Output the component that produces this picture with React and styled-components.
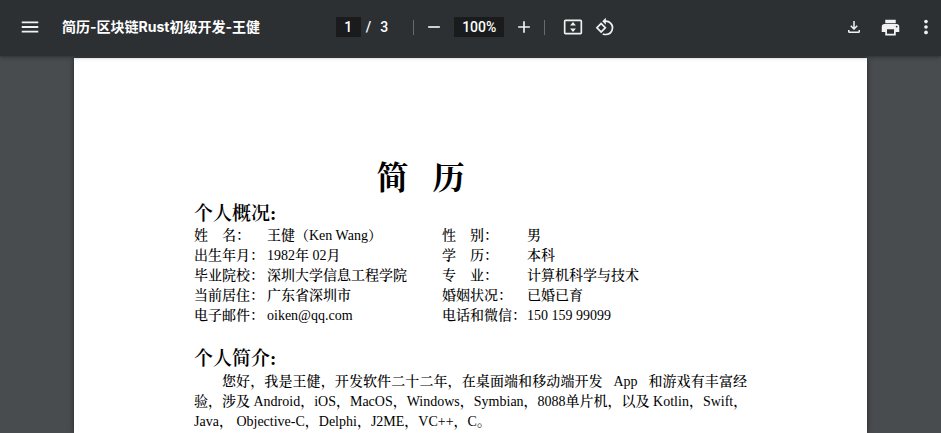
import React from "react";
import styled, { createGlobalStyle } from "styled-components";

const uiFont = '"Inter", "Noto Sans CJK SC", sans-serif';
const documentFont = '"Liberation Serif", "Noto Serif CJK SC", "Noto Sans CJK SC", serif';

const GlobalStyle = createGlobalStyle`
  *, *::before, *::after { box-sizing: border-box; }
  body { margin: 0; background: #494c4f; }
`;

const Viewer = styled.div`
  display: flex;
  flex-direction: column;
  height: 100vh;
  overflow: hidden;
`;

const Toolbar = styled.header`
  position: relative;
  z-index: 1;
  flex: none;
  display: grid;
  grid-template-columns: 1fr auto 1fr;
  align-items: center;
  height: 56px;
  padding-bottom: 2px;
  background: #2d3033;
  color: #fff;
  font-family: ${uiFont};
  box-shadow: 0 1px 4px rgba(0, 0, 0, 0.4);
`;

const StartGroup = styled.div`
  display: flex;
  align-items: center;
  gap: 16px;
  padding-left: 14px;
`;

const CenterGroup = styled.div`
  display: flex;
  align-items: center;
  padding-left: 16px;
`;

const EndGroup = styled.div`
  display: flex;
  justify-content: flex-end;
  gap: 6px;
`;

const FileName = styled.h1`
  margin: 0;
  font-size: 14px;
  font-weight: 700;
  line-height: 20px;
  white-space: nowrap;
`;

const IconButton = styled.button`
  display: flex;
  align-items: center;
  justify-content: center;
  width: ${({ $wide }) => ($wide ? "32px" : "30px")};
  height: 32px;
  padding: 0;
  border: 0;
  background: transparent;
  color: #f1f1f1;
  cursor: pointer;
`;

const ToolbarInput = styled.input`
  width: ${({ $width }) => $width};
  height: 20px;
  padding: 0;
  border: 0;
  border-radius: 0;
  background: #191b1c;
  color: #fff;
  font-family: Roboto, sans-serif;
  font-size: 14px;
  font-weight: 500;
  text-align: center;
`;

const PageCount = styled.span`
  display: flex;
  gap: 9px;
  margin: 0 25px 0 5px;
  font-family: Roboto, sans-serif;
  font-size: 14px;
  font-weight: 500;
  line-height: 20px;
`;

const Divider = styled.span`
  width: 1px;
  height: 15px;
  background: #686b6e;
`;

const ZoomGroup = styled.div`
  display: flex;
  align-items: center;
  gap: 5px;
  padding: 0 5px;
`;

const ViewGroup = styled.div`
  display: flex;
  padding-left: 12px;
`;

const Canvas = styled.main`
  flex: 1;
  min-height: 0;
  padding-top: 2px;
  overflow: hidden;
`;

const Sheet = styled.article`
  width: 100%;
  max-width: 793px;
  min-height: 100%;
  margin: 0 auto;
  padding: 97px 120px 0;
  background: #fff;
  color: #000;
  font-family: ${documentFont};
  font-size: 14px;
  font-weight: 500;
  line-height: 20px;
  box-shadow: 0 0 5px rgba(0, 0, 0, 0.5);
`;

const Title = styled.h2`
  display: flex;
  justify-content: center;
  gap: 24px;
  margin: 0;
  padding-right: 100px;
  font-size: 32px;
  font-weight: 700;
  line-height: 47px;
`;

const SectionTitle = styled.h3`
  margin: 0;
  font-size: 19px;
  font-weight: 600;
  line-height: 24px;
`;

const Details = styled.dl`
  display: grid;
  grid-template-columns: 73px 175px 85px auto;
  margin: 0 0 21px;
  white-space: pre;
`;

const Term = styled.dt`
  margin: 0;
`;

const Value = styled.dd`
  margin: 0;
`;

const Summary = styled.p`
  margin: 1px 0 0;
`;

const Line = styled.span`
  display: block;
  padding-left: ${({ $indent }) => ($indent ? "28px" : "0")};
  text-align-last: ${({ $fill }) => ($fill ? "justify" : "start")};
  white-space: nowrap;
`;

const Icon = ({ size = 24, children }) => (
  <svg width={size} height={size} viewBox="0 0 24 24" fill="currentColor" aria-hidden="true">
    {children}
  </svg>
);

const details = [
  ["姓　名：", "王健（Ken Wang）", "性　别：", "男"],
  ["出生年月：", "1982年 02月", "学　历：", "本科"],
  ["毕业院校：", "深圳大学信息工程学院", "专　业：", "计算机科学与技术"],
  ["当前居住：", "广东省深圳市", "婚姻状况：", "已婚已育"],
  ["电子邮件：", "oiken@qq.com", "电话和微信：", "150 159 99099"],
];

export default function App() {
  return (
    <Viewer lang="zh-CN">
      <GlobalStyle />
      <Toolbar>
        <StartGroup>
          <IconButton $wide aria-label="菜单">
            <Icon size={22}><path d="M3 18h18v-2H3v2zm0-5h18v-2H3v2zm0-7v2h18V6H3z" /></Icon>
          </IconButton>
          <FileName>简历-区块链Rust初级开发-王健</FileName>
        </StartGroup>
        <CenterGroup>
          <ToolbarInput $width="25px" aria-label="页码" defaultValue="1" />
          <PageCount><span>/</span><span>3</span></PageCount>
          <Divider />
          <ZoomGroup>
            <IconButton aria-label="缩小">
              <Icon size={20}><path d="M5 11h14v2H5z" /></Icon>
            </IconButton>
            <ToolbarInput $width="50px" aria-label="缩放比例" defaultValue="100%" />
            <IconButton aria-label="放大">
              <Icon size={20}><path d="M19 13h-6v6h-2v-6H5v-2h6V5h2v6h6v2z" /></Icon>
            </IconButton>
          </ZoomGroup>
          <Divider />
          <ViewGroup>
            <IconButton $wide aria-label="适合页面大小">
              <Icon size={20}>
                <path fillRule="evenodd" d="M3 3h18a2 2 0 0 1 2 2v14a2 2 0 0 1-2 2H3a2 2 0 0 1-2-2V5a2 2 0 0 1 2-2zm0 2v14h18V5H3z" />
                <path d="M12 6 15.500 10.200h-7zM12 18 8.500 13.800h7z" />
              </Icon>
            </IconButton>
            <IconButton $wide aria-label="逆时针旋转">
              <Icon size={20}>
                <path d="M7.340 6.410.860 12.900l6.490 6.480 6.490-6.480-6.500-6.490zM3.690 12.900l3.660-3.660L11 12.900l-3.660 3.660-3.650-3.660zm15.670-6.260A8.950 8.950 0 0 0 13 4V.760L8.760 5 13 9.240V6a7 7 0 1 1 0 14c-.970 0-1.940-.210-2.840-.610l-1.490 1.490A8.980 8.980 0 0 0 13 22a9 9 0 0 0 6.360-15.360z" />
              </Icon>
            </IconButton>
          </ViewGroup>
        </CenterGroup>
        <EndGroup>
          <IconButton aria-label="下载">
            <Icon size={18}><path d="M11 4h2v8.200l2.600-2.600L17 11l-5 5-5-5 1.400-1.400 2.600 2.600zM4 16h2v2h12v-2h2v2a2 2 0 0 1-2 2H6a2 2 0 0 1-2-2z" /></Icon>
          </IconButton>
          <IconButton aria-label="打印">
            <Icon size={21}><path d="M19 8H5c-1.660 0-3 1.340-3 3v6h4v4h12v-4h4v-6c0-1.660-1.340-3-3-3zm-3 11H8v-5h8v5zm3-7c-.550 0-1-.450-1-1s.450-1 1-1 1 .450 1 1-.450 1-1 1zm-1-9H6v4h12V3z" /></Icon>
          </IconButton>
          <IconButton aria-label="更多操作">
            <Icon size={20}><circle cx="12" cy="5.500" r="2.200" /><circle cx="12" cy="12" r="2.200" /><circle cx="12" cy="18.500" r="2.200" /></Icon>
          </IconButton>
        </EndGroup>
      </Toolbar>
      <Canvas>
        <Sheet>
          <Title><span>简</span><span>历</span></Title>
          <SectionTitle>个人概况:</SectionTitle>
          <Details>
            {details.map(([leftTerm, leftValue, rightTerm, rightValue]) => (
              <React.Fragment key={leftTerm}>
                <Term>{leftTerm}</Term>
                <Value>{leftValue}</Value>
                <Term>{rightTerm}</Term>
                <Value>{rightValue}</Value>
              </React.Fragment>
            ))}
          </Details>
          <SectionTitle>个人简介:</SectionTitle>
          <Summary>
            <Line $indent $fill>您好，我是王健，开发软件二十二年，在桌面端和移动端开发&nbsp;&nbsp; App &nbsp;&nbsp;和游戏有丰富经</Line>
            <Line $fill>验，涉及 Android，iOS，MacOS，Windows，Symbian，8088单片机，以及 Kotlin，Swift，</Line>
            <Line>Java， Objective-C，Delphi，J2ME，VC++，C。</Line>
          </Summary>
        </Sheet>
      </Canvas>
    </Viewer>
  );
}
